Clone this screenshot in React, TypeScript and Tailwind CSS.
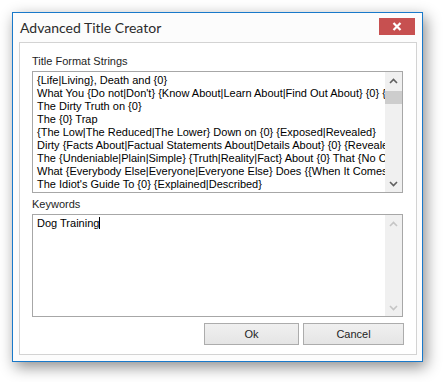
import React from 'react';

const formatLines = [
    "{Life|Living}, Death and {0}",
    "What You {Do not|Don't} {Know About|Learn About|Find Out About} {0} {Revealed}",
    "The Dirty Truth on {0}",
    "The {0} Trap",
    "{The Low|The Reduced|The Lower} Down on {0} {Exposed|Revealed}",
    "Dirty {Facts About|Factual Statements About|Details About} {0} {Revealed|Exposed}",
    "The {Undeniable|Plain|Simple} {Truth|Reality|Fact} About {0} That {No One Is Telling You}",
    "What {Everybody Else|Everyone|Everyone Else} Does {{When It Comes To|In Regards To} {0}",
    "The Idiot's Guide To {0} {Explained|Described}",
];

const Chevron = ({ up, color }: { up?: boolean; color: string }) => (
    <svg width="9" height="6" viewBox="0 0 9 6">
        <path d={up ? "M1 5 L4.5 1.5 L8 5" : "M1 1 L4.5 4.5 L8 1"} fill="none" stroke={color} strokeWidth="1.6" />
    </svg>
);

const Button = ({ label, width }: { label: string; width: string }) => (
    <button className={`${width} h-[22px] border border-[#acacac] bg-gradient-to-b from-[#f0f0f0] to-[#e5e5e5] text-[11px] text-[#1e1e1e]`}>
        {label}
    </button>
);

export default function App() {
    return (
        <div className="w-[443px] h-[382px] bg-white p-3 font-['Liberation_Sans',Tahoma,sans-serif]">
            <div className="w-[411px] h-[350px] border border-[#1979ca] bg-[#fcfcfc] flex flex-col shadow-[3px_5px_14px_rgba(0,0,0,0.45)]">
                {/* Title bar */}
                <div className="h-[29px] flex items-start justify-between pl-[7px] pr-[7px]">
                    <span className="mt-[5px] text-[14px] leading-[20px] text-[#2b2b2b] font-['Lato',sans-serif]">
                        Advanced Title Creator
                    </span>
                    <button className="mt-[5px] w-[36px] h-[17px] bg-[#c75050] flex items-center justify-center">
                        <svg width="10" height="9" viewBox="0 0 10 9">
                            <path d="M1.5 1 L8.5 8 M8.5 1 L1.5 8" stroke="white" strokeWidth="2.2" />
                        </svg>
                    </button>
                </div>

                {/* Group panel */}
                <div className="flex-1 ml-[6px] mr-[5px] mb-[6px] border border-[#d3d3d3] bg-white pl-[12px] pr-[13px] pt-[11px] flex flex-col text-[11px] text-[#1e1e1e]">
                    <div className="h-[17px] leading-[15px]">Title Format Strings</div>
                    <div className="h-[122px] border border-[#a7a7a7] flex">
                        <div className="flex-1 overflow-hidden pl-[4px] pt-[2px] leading-[13px] text-black">
                            {formatLines.map((l, i) => (
                                <div key={i} className="whitespace-nowrap">{l}</div>
                            ))}
                        </div>
                        <div className="w-[17px] bg-[#f0f0f0] flex flex-col items-center">
                            <div className="h-[17px] flex items-center justify-center"><Chevron up color="#606060" /></div>
                            <div className="w-[17px] h-[13px] mt-[2px] bg-[#cdcdcd]" />
                            <div className="flex-1" />
                            <div className="h-[17px] flex items-center justify-center"><Chevron color="#606060" /></div>
                        </div>
                    </div>

                    <div className="h-[21px] pt-[4px] leading-[15px]">Keywords</div>
                    <div className="h-[103px] border border-[#a7a7a7] flex">
                        <div className="flex-1 pl-[4px] pt-[2px] leading-[13px] text-black">
                            Dog Training<span className="inline-block w-px h-[12px] bg-black align-middle -mt-[2px]" />
                        </div>
                        <div className="w-[17px] bg-[#f0f0f0] flex flex-col justify-between items-center">
                            <div className="h-[17px] flex items-center justify-center"><Chevron up color="#c5c5c5" /></div>
                            <div className="h-[17px] flex items-center justify-center"><Chevron color="#c5c5c5" /></div>
                        </div>
                    </div>

                    <div className="flex justify-end gap-[4px] mt-[6px] mr-[-1px]">
                        <Button label="Ok" width="w-[95px]" />
                        <Button label="Cancel" width="w-[101px]" />
                    </div>
                </div>
            </div>
        </div>
    );
}
